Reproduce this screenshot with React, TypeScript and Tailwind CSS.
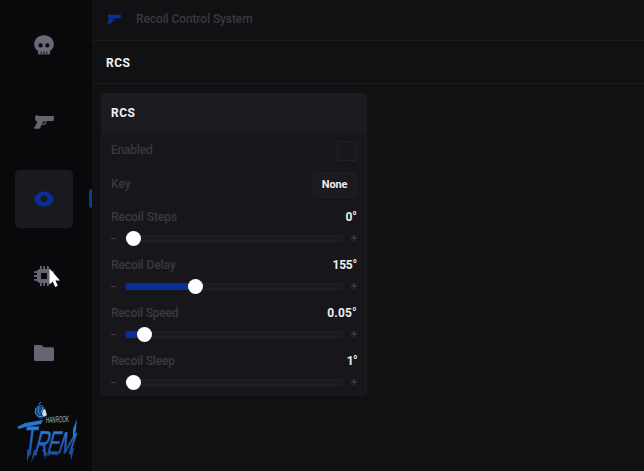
import type { ReactNode } from "react";

type SliderProps = { label: string; value: string; knob: number; spacing: string; valueSpacing: string };

const sliders: SliderProps[] = [
  { label: "Recoil Steps", value: "0°", knob: 8, spacing: "tracking-[-0.05px]", valueSpacing: "tracking-[0px]" },
  { label: "Recoil Delay", value: "155°", knob: 70, spacing: "tracking-[-0.1px]", valueSpacing: "tracking-[-0.2px]" },
  { label: "Recoil Speed", value: "0.05°", knob: 19, spacing: "tracking-[-0.2px]", valueSpacing: "tracking-[0.2px]" },
  { label: "Recoil Sleep", value: "1°", knob: 8, spacing: "tracking-[-0.2px]", valueSpacing: "tracking-[-0.7px]" },
];

function Gun({ className }: { className: string }) {
  return (
    <svg viewBox="0 0 20 14" className={className} fill="currentColor">
      <path
        fillRule="evenodd"
        d="M1.200 1.200 2 .3h1.500l.6.7H18.600l.7-.5.5.6v4.300l-.7.6h-6.400l-.8 2.500c-.3.9-.8 1.200-1.700 1.200H7.500l-1.200 3.100c-.2.6-.6.9-1.200.9H1c-.8 0-1.100-.6-.8-1.200L3 7.700c.3-.7.2-1.400-.5-1.700L1.200 5.400Z M9 6.300 8.300 8.400h1.900c.4 0 .6-.2.7-.5l.6-1.600h-1.200l.1 1.100-.6-.3Z"
      />
    </svg>
  );
}

function Skull() {
  return (
    <svg viewBox="0 0 20 20" className="h-5 w-5" fill="#696979">
      <path
        fillRule="evenodd"
        d="M10 .2C4.300.2.200 4 .200 9.200c0 3 1.500 5.300 3.800 6.700v2.200c0 .8.500 1.300 1.200 1.300h1.500V16.500h.8v2.900h2V16.500h1v2.900h2V16.500h.8v2.900h1.500c.7 0 1.200-.5 1.200-1.300v-2.200c2.300-1.400 3.800-3.700 3.800-6.700C19.800 4 15.700.2 10 .2Z M6.600 8.300a2.100 2.100 0 1 1 0 4.200 2.100 2.100 0 0 1 0-4.200Z M13.300 8.300a2.100 2.100 0 1 1 0 4.200 2.100 2.100 0 0 1 0-4.200Z"
      />
    </svg>
  );
}

function Eye() {
  return (
    <svg viewBox="0 0 20 16" className="h-4 w-5" fill="#092f96">
      <path
        fillRule="evenodd"
        d="M10 .5C5.800.5 2.500 3 .700 6.800a2.600 2.600 0 0 0 0 2.400C2.500 13 5.800 15.500 10 15.500s7.500-2.500 9.300-6.300a2.600 2.600 0 0 0 0-2.400C17.500 3 14.200.5 10 .5Z M8.500 4.800h3L13.300 6.500v3L11.500 11.200h-3L6.700 9.500v-3Z"
      />
    </svg>
  );
}

function Chip() {
  return (
    <svg viewBox="0 0 20 20" className="h-5 w-5" fill="#656573">
      <path
        fillRule="evenodd"
        d="M6 0h1.800v3h1.500V0h1.700v3h2V0h1.800v3c1.200 0 2.200 1 2.200 2.200h3V7h-3v2.100h3v1.800h-3V13h3v1.800h-3c0 1.200-1 2.200-2.200 2.200v3H13v-3h-2v3H9.300v-3H7.800v3H6v-3c-1.600 0-3-1-3-2.200H0V13h3v-2.100H0V9.100h3V7H0V5.200h3C3 4 4.400 3 6 3Z M7 7v6h6V7Z"
      />
    </svg>
  );
}

function Folder() {
  return (
    <svg viewBox="0 0 20 16" className="h-4 w-5" fill="#656573">
      <path d="M1.500 0h5.300c.6 0 .9.200 1.300.6L9.600 2.200h8.900c.9 0 1.500.6 1.500 1.500v10.800c0 .9-.6 1.500-1.500 1.500h-17C.6 16 0 15.400 0 14.500v-13C0 .6.600 0 1.500 0Z" />
    </svg>
  );
}

function Logo() {
  return (
    <svg viewBox="0 0 64 66" className="h-[66px] w-16 overflow-visible">
      <defs>
        <linearGradient id="ink" x1="0" y1="0" x2="0" y2="1">
          <stop offset="0" stopColor="#2e8ce6" />
          <stop offset=".5" stopColor="#2266c4" />
          <stop offset="1" stopColor="#163f95" />
        </linearGradient>
      </defs>
      <path d="m18 6 4-4 4 1 3 5-1 6-4 3-5-3Z" fill="#143f79" />
      <path d="m19 6-1 5 4 4 4-1M22 4l-1 5 2 4M26 5l-2 6M24 0l-2 2" fill="none" stroke="#3c8fcb" strokeWidth="1" />
      <path d="m26 8 2-1 1 3 1 3-3 2-2-3Z" fill="#cbdde8" />
      <text x="29" y="21" transform="rotate(-3 31 20)" fontFamily="Liberation Sans, sans-serif" fontSize="9" fontStyle="italic" textLength="23" lengthAdjust="spacingAndGlyphs" fill="#b3b5b7">HANROOK</text>
      <g fontFamily="Liberation Sans, sans-serif" fill="url(#ink)" stroke="#2163bd" strokeWidth=".5">
        <text transform="translate(6 53) skewX(-7)" fontSize="41" textLength="13" lengthAdjust="spacingAndGlyphs">T</text>
        <text transform="translate(16 53) rotate(1) skewX(-14)" fontSize="35" textLength="14" lengthAdjust="spacingAndGlyphs">R</text>
        <text transform="translate(29 52) rotate(1) skewX(-14)" fontSize="33" textLength="12" lengthAdjust="spacingAndGlyphs">E</text>
        <text transform="translate(40 51) rotate(4) skewX(-14)" fontSize="31" textLength="15" lengthAdjust="spacingAndGlyphs">M</text>
      </g>
      <path d="m0 25 8-4 18-3-2 4-16 3-6 2Z" fill="#2878d1" />
      <path d="m10 48 0 12 4-13ZM17 48l-3 13 6-13ZM26 47l8 8-9-6ZM31 51l-5 7 8-8ZM42 49l-3 6 5-6ZM53 47l1 12 3-13Z" fill="#1d50a5" />
      <path d="m56 27 4-10-1 11-3 8Z" fill="#267ad1" />
    </svg>
  );
}

function NavItem({ children, active = false }: { children: ReactNode; active?: boolean }) {
  return (
    <div className={`flex h-[58px] w-[58px] shrink-0 items-center justify-center rounded-[5px] ${active ? "bg-[#191a20]" : ""}`}>
      {children}
    </div>
  );
}

function Slider({ label, value, knob, spacing, valueSpacing }: SliderProps) {
  return (
    <div className="h-12 shrink-0">
      <div className="flex h-5 items-center justify-between pt-[2px]">
        <span className={`text-[12px] leading-5 font-medium text-[#393942] ${spacing}`}>{label}</span>
        <span className={`text-[12px] leading-5 font-bold text-[#eeeeef] ${valueSpacing}`}>{value}</span>
      </div>
      <div className="flex h-6 items-center">
        <span className="h-px w-[5px] bg-[#3b3b43]" />
        <div className="relative ml-[9px] h-[7px] w-[218px] rounded-[2px] border border-[#212126] bg-[#1b1b20]">
          <div className="absolute -top-px left-0 h-[7px] rounded-[1px] bg-[#082f96]" style={{ width: knob }} />
          <div className="absolute -top-[5px] h-[15px] w-[15px] rounded-full bg-white" style={{ left: knob - 8 }} />
        </div>
        <svg viewBox="0 0 6 6" className="ml-2 h-1.5 w-1.5" fill="none" stroke="#46464d">
          <path d="M3 0v6M0 3h6" />
        </svg>
      </div>
    </div>
  );
}

export default function App() {
  return (
    <div className="flex h-[471px] w-[644px] overflow-hidden bg-[#111113] font-[Roboto,sans-serif]">
      <aside className="relative flex w-[92px] shrink-0 flex-col bg-[#09090b] pt-4 pl-[15px]">
        <nav className="flex flex-col gap-[19px]">
          <NavItem><Skull /></NavItem>
          <NavItem><Gun className="mb-px h-[14px] w-5 text-[#656572]" /></NavItem>
          <NavItem active><Eye /></NavItem>
          <NavItem><Chip /></NavItem>
          <NavItem><Folder /></NavItem>
        </nav>
        <span className="absolute top-[189px] right-0 h-[19px] w-[3px] rounded-l-sm bg-[#103994]" />
        <div className="absolute top-[402px] left-[17px]"><Logo /></div>
        <svg viewBox="0 0 12 20" className="absolute top-[268px] left-[49px] h-5 w-3" fill="white">
          <path d="M.5.500v16l3.200-3 2.500 5.500 2.600-1.200L6.500 12.500H11Z" />
        </svg>
      </aside>
      <main className="flex flex-1 flex-col">
        <header className="flex h-[41px] shrink-0 items-center border-b border-[#1b1b1d] pb-[3px] pl-[15px]">
          <Gun className="h-[10px] w-[14px] text-[#0a3096]" />
          <span className="ml-[15px] text-[12px] leading-4 font-medium tracking-[-0.1px] text-[#393941]">Recoil Control System</span>
        </header>
        <div className="flex h-[43px] shrink-0 items-center border-b border-[#1b1b1d] pt-[2px] pl-[14px]">
          <h1 className="text-[12px] font-bold tracking-[0.5px] text-[#f1f1f2]">RCS</h1>
        </div>
        <section className="mt-[9px] ml-[9px] h-[303px] w-[266px] overflow-hidden rounded-[4px] border border-[#1c1c20] bg-[#17171b]">
          <div className="flex h-[39px] items-center bg-[#1b1b20] pb-[2px] pl-[9px]">
            <h2 className="text-[12px] font-bold tracking-[0.5px] text-[#f1f1f2]">RCS</h2>
          </div>
          <div className="px-[9px]">
            <div className="flex h-[35px] items-center justify-between">
              <span className="pb-px text-[12px] font-medium tracking-[-0.2px] text-[#393942]">Enabled</span>
              <span className="h-5 w-5 rounded-[2px] border border-[#222228] bg-[#18181c]" />
            </div>
            <div className="flex h-[33px] items-center justify-between">
              <span className="pb-[2px] text-[12px] font-medium text-[#393942]">Key</span>
              <button className="flex h-[26px] w-[45px] items-center justify-center rounded-[4px] border border-[#1e1e23] bg-[#1b1b1f] pt-[2px] text-[11px] font-bold tracking-[-0.2px] text-[#eeeeef]">None</button>
            </div>
            <div className="pt-[5px]">
              {sliders.map((slider) => <Slider key={slider.label} {...slider} />)}
            </div>
          </div>
        </section>
      </main>
    </div>
  );
}
